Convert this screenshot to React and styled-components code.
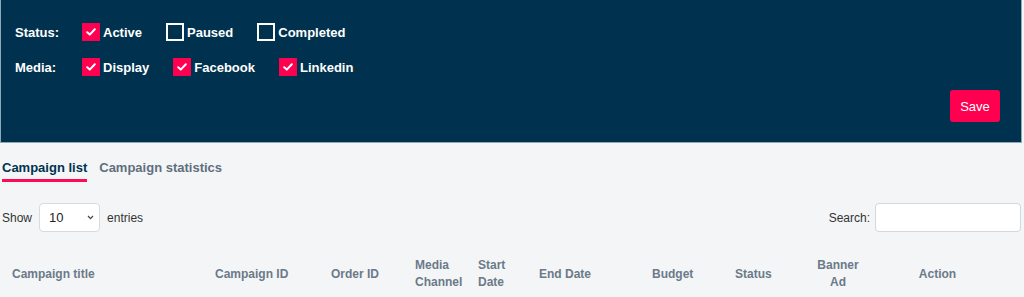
import React from "react";
import styled, { createGlobalStyle } from "styled-components";

const Global = createGlobalStyle`
  html, body { margin: 0; padding: 0; background: #f4f5f7; }
  body { font-family: "Liberation Sans", Arial, Helvetica, sans-serif; color: #333; }
  * { box-sizing: border-box; }
`;

const Page = styled.div`
  width: 1024px;
  min-height: 297px;
  background: #f4f5f7;
`;

const Panel = styled.section`
  margin-right: 2px;
  background: #003250;
  border: 1px solid #8fa8ba;
  border-top: none;
  padding: 23px 21px 20px 14px;
  display: flex;
  flex-direction: column;
`;

const FilterRow = styled.div`
  display: flex;
  align-items: center;
  height: 18px;
  margin-bottom: ${(p) => (p.$last ? 0 : 17)}px;
`;

const RowLabel = styled.span`
  width: 67px;
  color: #fff;
  font-size: 13px;
  font-weight: 700;
  padding-top: 1px;
`;

const Option = styled.label`
  display: flex;
  align-items: center;
  gap: 3px;
  margin-right: 24px;
  color: #fff;
  font-size: 13px;
  font-weight: 700;
`;

const OptionText = styled.span`
  padding-top: 1px;
`;

const Box = styled.span`
  width: 18px;
  height: 18px;
  display: flex;
  align-items: center;
  justify-content: center;
  background: ${(p) => (p.$checked ? "#ff0050" : "transparent")};
  border: ${(p) => (p.$checked ? "none" : "2px solid #ffffff")};
`;

const SaveRow = styled.div`
  display: flex;
  justify-content: flex-end;
  margin-top: 14px;
`;

const SaveButton = styled.button`
  width: 50px;
  height: 32px;
  border: none;
  border-radius: 3px;
  background: #ff0050;
  color: #fff;
  font-family: inherit;
  font-size: 13px;
  padding: 0;
`;

const Content = styled.main`
  padding: 0 3px 0 2px;
`;

const Tabs = styled.nav`
  display: flex;
  gap: 12px;
  margin-top: 17px;
`;

const Tab = styled.div`
  font-size: 13px;
  font-weight: 700;
  line-height: 16px;
  padding-bottom: 3px;
  color: ${(p) => (p.$active ? "#00334e" : "#5f6f7e")};
  border-bottom: 3px solid ${(p) => (p.$active ? "#ff0a54" : "transparent")};
`;

const Controls = styled.div`
  display: flex;
  justify-content: space-between;
  align-items: center;
  margin-top: 21px;
`;

const ControlGroup = styled.div`
  display: flex;
  align-items: center;
  gap: ${(p) => p.$gap}px;
  font-size: 12px;
  color: #333;
`;

const SelectWrap = styled.div`
  position: relative;
  width: 61px;
  height: 29px;
`;

const Select = styled.select`
  appearance: none;
  width: 100%;
  height: 100%;
  border: 1px solid #d6dbe0;
  border-radius: 4px;
  background: #fff;
  padding: 0 0 0 9px;
  font-family: inherit;
  font-size: 13px;
  color: #222;
`;

const Chevron = styled.svg`
  position: absolute;
  right: 6px;
  top: 12px;
  pointer-events: none;
`;

const SearchInput = styled.input`
  width: 146px;
  height: 29px;
  border: 1px solid #d3d8dd;
  border-radius: 4px;
  background: #fff;
`;

const Table = styled.table`
  table-layout: fixed;
  width: 993px;
  border-collapse: collapse;
  margin-top: 17px;
`;

const Th = styled.th`
  width: ${(p) => p.$w}px;
  text-align: ${(p) => (p.$center ? "center" : "left")};
  padding: 8px ${(p) => (p.$center ? 20 : 0)}px 8px ${(p) => (p.$center ? 20 : 10)}px;
  font-size: 12px;
  font-weight: 700;
  line-height: 17px;
  color: #6b7a89;
  vertical-align: middle;
`;

const Check = () => (
  <svg width="10" height="8" viewBox="0 0 10 8">
    <path d="M1.2 4.2 L3.8 6.6 L8.8 1.2" stroke="#fff" strokeWidth="2" fill="none" strokeLinecap="round" strokeLinejoin="round" />
  </svg>
);

const CheckOption = ({ label, checked }) => (
  <Option>
    <Box $checked={checked}>{checked && <Check />}</Box>
    <OptionText>{label}</OptionText>
  </Option>
);

const columns = [
  { t: "Campaign title", w: 203 },
  { t: "Campaign ID", w: 116 },
  { t: "Order ID", w: 84 },
  { t: "Media Channel", w: 63 },
  { t: "Start Date", w: 61 },
  { t: "End Date", w: 113 },
  { t: "Budget", w: 83 },
  { t: "Status", w: 71 },
  { t: "Banner Ad", w: 84, c: true },
  { t: "Action", w: 115, c: true },
];

export default function App() {
  return (
    <Page>
      <Global />
      <Panel>
        <FilterRow>
          <RowLabel>Status:</RowLabel>
          <CheckOption label="Active" checked />
          <CheckOption label="Paused" />
          <CheckOption label="Completed" />
        </FilterRow>
        <FilterRow $last>
          <RowLabel>Media:</RowLabel>
          <CheckOption label="Display" checked />
          <CheckOption label="Facebook" checked />
          <CheckOption label="Linkedin" checked />
        </FilterRow>
        <SaveRow>
          <SaveButton>Save</SaveButton>
        </SaveRow>
      </Panel>
      <Content>
        <Tabs>
          <Tab $active>Campaign list</Tab>
          <Tab>Campaign statistics</Tab>
        </Tabs>
        <Controls>
          <ControlGroup $gap={7}>
            Show
            <SelectWrap>
              <Select defaultValue="10">
                <option>10</option>
                <option>25</option>
                <option>50</option>
              </Select>
              <Chevron width="7" height="5" viewBox="0 0 7 5">
                <path d="M1 1 L3.5 3.6 L6 1" stroke="#444" strokeWidth="1.2" fill="none" />
              </Chevron>
            </SelectWrap>
            entries
          </ControlGroup>
          <ControlGroup $gap={5}>
            Search:
            <SearchInput />
          </ControlGroup>
        </Controls>
        <Table>
          <thead>
            <tr>
              {columns.map((c) => (
                <Th key={c.t} $w={c.w} $center={c.c}>
                  {c.t}
                </Th>
              ))}
            </tr>
          </thead>
        </Table>
      </Content>
    </Page>
  );
}
